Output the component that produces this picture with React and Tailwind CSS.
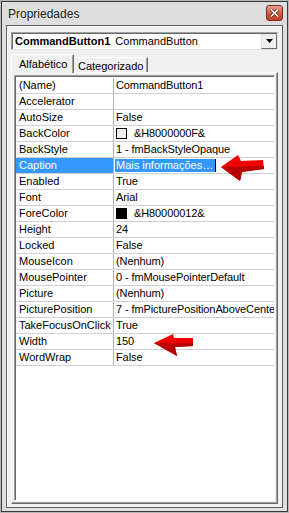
import React from "react";

const rows = [
  { name: "(Name)", value: "CommandButton1" },
  { name: "Accelerator", value: "" },
  { name: "AutoSize", value: "False" },
  { name: "BackColor", value: "&H8000000F&", swatch: "bg-[#f0f0f0]" },
  { name: "BackStyle", value: "1 - fmBackStyleOpaque" },
  { name: "Caption", value: "Mais informações…", selected: true },
  { name: "Enabled", value: "True" },
  { name: "Font", value: "Arial" },
  { name: "ForeColor", value: "&H80000012&", swatch: "bg-black" },
  { name: "Height", value: "24" },
  { name: "Locked", value: "False" },
  { name: "MouseIcon", value: "(Nenhum)" },
  { name: "MousePointer", value: "0 - fmMousePointerDefault" },
  { name: "Picture", value: "(Nenhum)" },
  { name: "PicturePosition", value: "7 - fmPicturePositionAboveCente" },
  { name: "TakeFocusOnClick", value: "True" },
  { name: "Width", value: "150" },
  { name: "WordWrap", value: "False" },
];

const RedArrow = ({ points, shade }) => (
  <svg className="absolute left-0 top-0" width="289" height="513" viewBox="0 0 289 513">
    <polygon points={points} fill="#f00000" />
    <polygon points={shade} fill="#b80000" />
  </svg>
);

const PropRow = ({ row }) => (
  <div className="flex h-[16px] border-b border-[#d0d0d0]">
    <div
      className={`w-[98px] shrink-0 pl-[3px] flex items-center border-r border-[#b4b4b4] whitespace-nowrap overflow-hidden ${
        row.selected ? "bg-[#3399ff] text-white" : ""
      }`}
    >
      {row.name}
    </div>
    <div className="flex-1 min-w-0 pl-[1px] flex items-center whitespace-nowrap overflow-hidden">
      {row.swatch && (
        <span className={`w-[11px] h-[11px] ml-[1px] mr-[6px] border border-black shrink-0 ${row.swatch}`} />
      )}
      {row.selected ? (
        <>
          <span className="bg-[#3399ff] text-white pl-[1px] pr-[2px] leading-[13px]">{row.value}</span>
          <span className="w-[1px] h-[13px] bg-black" />
        </>
      ) : (
        <span className="pl-[1px] tracking-[-0.1px]">{row.value}</span>
      )}
    </div>
  </div>
);

export default function App() {
  return (
    <div className="relative w-[289px] h-[513px] border border-[#b8b8b8] font-['Liberation_Sans',Arial,sans-serif] text-[11px] text-black">
      <div className="w-full h-full flex flex-col border border-[#3a3a3a] bg-[#dedede] px-[4px] pb-[3px]">
        {/* title bar */}
        <div className="h-[23px] flex items-center pl-[2px] pr-0">
          <span className="flex-1 text-[12px] text-[#1e1e1e] pt-[1px]">Propriedades</span>
          <div className="w-[17px] h-[16px] mt-[-2px] rounded-[3px] border border-[#7a2b20] bg-gradient-to-b from-[#e8a090] via-[#d25c45] to-[#c0402a] flex items-center justify-center">
            <svg width="9" height="8" viewBox="0 0 9 8">
              <path d="M1 0.5 L8 7.5 M8 0.5 L1 7.5" stroke="#5a1a10" strokeWidth="3" />
              <path d="M1 0.5 L8 7.5 M8 0.5 L1 7.5" stroke="#ffffff" strokeWidth="1.6" />
            </svg>
          </div>
        </div>

        {/* client area */}
        <div className="flex-1 flex flex-col border border-[#5e5e5e] shadow-[inset_1px_1px_0_#ffffff] bg-[#f0f0f0] px-[4px] pt-[6px] pb-[3px]">
          {/* object combo */}
          <div className="h-[18px] flex items-center border border-t-[#a0a0a0] border-l-[#a0a0a0] border-r-[#e3e3e3] border-b-[#e3e3e3] bg-white shadow-[inset_1px_1px_0_#696969]">
            <div className="flex-1 pl-[3px] pt-[1px] whitespace-nowrap overflow-hidden">
              <span className="font-bold">CommandButton1</span>
              <span className="ml-[5px]">CommandButton</span>
            </div>
            <div className="w-[16px] h-[15px] flex items-center justify-center bg-[#f0f0f0] border border-t-[#e3e3e3] border-l-[#e3e3e3] border-r-[#696969] border-b-[#696969]">
              <svg width="7" height="4" viewBox="0 0 7 4">
                <polygon points="0,0 7,0 3.5,4" fill="#000" />
              </svg>
            </div>
          </div>

          {/* tabs */}
          <div className="mt-[4px] h-[18px] flex items-end">
            <div className="relative z-10 h-[19px] mb-[-1px] w-[63px] bg-[#f0f0f0] border-l border-t border-white border-r border-r-[#696969] shadow-[inset_-1px_0_0_#a0a0a0] pl-[7px] pt-[1px]">
              Alfabético
            </div>
            <div className="h-[15px] w-[74px] border-t border-white border-r border-r-[#696969] shadow-[inset_-1px_0_0_#a0a0a0] pl-[4px]">
              Categorizado
            </div>
          </div>

          {/* tab page */}
          <div className="flex-1 flex flex-col border border-t-white border-l-white border-r-[#696969] border-b-[#696969] shadow-[inset_-1px_-1px_0_#a0a0a0] px-[2px] pt-[2px] pb-[2px]">
            <div className="flex-1 border border-t-[#a0a0a0] border-l-[#a0a0a0] border-r-white border-b-white shadow-[inset_1px_1px_0_#696969] bg-white pl-[1px] pt-[2px]">
              {rows.map((row) => (
                <PropRow key={row.name} row={row} />
              ))}
            </div>
          </div>
        </div>
      </div>

      {/* annotation arrows */}
      <RedArrow
        points="220,166 237,154 240,160 262,159 263,168 241,171 239,180"
        shade="220,166 263,165 263,168 241,171 239,180"
      />
      <RedArrow
        points="153,342 172,333 173,337 192,337 192,345 174,346 176,355"
        shade="153,342 192,342 192,345 174,346 176,355"
      />
    </div>
  );
}
